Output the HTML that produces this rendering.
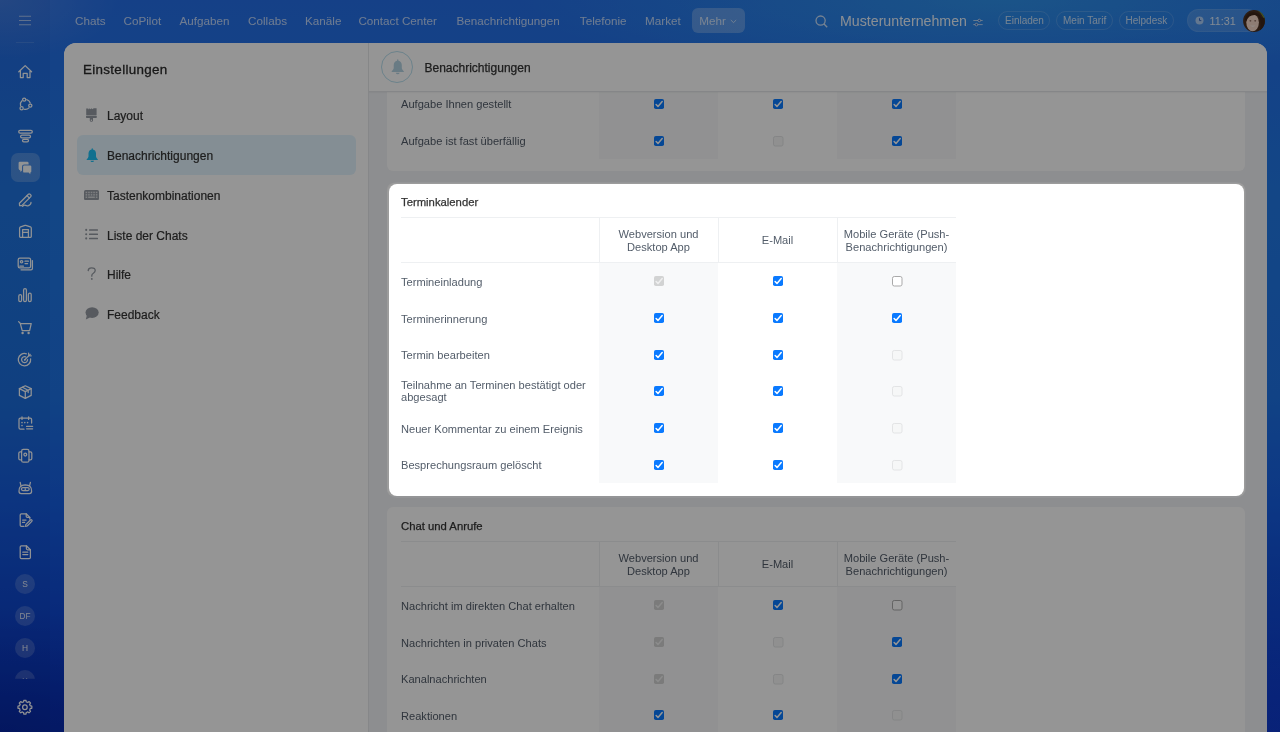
<!DOCTYPE html>
<html><head><meta charset="utf-8">
<style>
*{box-sizing:border-box;margin:0;padding:0}
html,body{width:1280px;height:732px;overflow:hidden}
body{-webkit-font-smoothing:antialiased}
#panel,#bg{will-change:transform}
body{position:relative;font-family:"Liberation Sans",sans-serif;background:linear-gradient(180deg,#2f6fd8 0%,#1d55cf 50%,#1038c8 100%)}
.abs{position:absolute}
#bg{position:absolute;left:0;top:0;width:1280px;height:732px;
 background:
  radial-gradient(ellipse 480px 80px at 1000px 0px, rgba(60,190,235,0.42), rgba(60,190,235,0) 100%),
  radial-gradient(ellipse 500px 160px at 1280px 732px, rgba(40,90,255,0.22), rgba(40,90,255,0) 100%),
  radial-gradient(ellipse 300px 120px at 0px 732px, rgba(0,0,60,0.18), rgba(0,0,60,0) 100%),
  radial-gradient(ellipse 120px 60px at 0px 0px, rgba(120,160,230,0.35), rgba(120,160,230,0) 100%),
  linear-gradient(180deg,rgb(36,110,232) 0%,rgb(33,121,230) 28%,rgb(30,114,228) 54%,rgb(22,94,226) 69%,rgb(10,55,198) 95%,rgb(9,50,192) 100%)}
#side2{position:absolute;left:0;top:0;width:50px;height:732px;background:rgba(0,0,30,0.035)}
.nav{position:absolute;top:14px;font-size:11.7px;color:rgba(255,255,255,0.7);white-space:nowrap;line-height:14px}
.ico{position:absolute;left:17px;width:16px;height:16px}
.ico svg{width:16px;height:16px;display:block}
#panel{position:absolute;left:64px;top:43px;width:1203px;height:700px;background:#fff;border-radius:12px 12px 0 0;overflow:hidden}
#leftp{position:absolute;left:0;top:0;width:305px;height:700px;background:#fff;border-right:1px solid #e6e8ea}
#content{position:absolute;left:305px;top:0;width:898px;height:700px;background:#f1f3f6}
#hdr{position:absolute;left:0;top:0;width:898px;height:49px;background:#fff;border-bottom:1px solid #e3e6e9;box-shadow:0 1px 1px rgba(0,0,0,0.03);z-index:5}
.card{position:absolute;left:18px;width:858px;background:#fff;border-radius:6px}
.ttl{position:absolute;left:14px;font-size:11.3px;color:#333;-webkit-text-stroke:0.25px #333}
.tbl{position:absolute;left:14px;width:555px}
.row{position:absolute;left:0;width:555px;height:36.5px}
.lbl{position:absolute;left:0;width:195px;font-size:11.1px;color:#525c69;line-height:12.5px}
.col{position:absolute;width:119px;background:#f8f9fa}
.cb{position:absolute;overflow:visible}
.cb.on{background:#0a7aff}
.cb.on::after,.cb.dis::after{content:"";position:absolute;left:3.3px;top:1.2px;width:2.6px;height:5.2px;border-right:1.6px solid #fff;border-bottom:1.6px solid #fff;transform:rotate(40deg)}
.cb.dis{background:#d6d6d6}
.cb.dis::after{border-color:#f0f0f0}
.cb.off{background:#fff;border:1px solid #767676}
.cb.doff{background:#fff;border:1px solid #dcdcdc}
.hdrtxt{position:absolute;width:119px;text-align:center;font-size:11.1px;color:#525c69;line-height:12.5px}
.mi{position:absolute;left:43px;font-size:12px;color:#333;line-height:14px;-webkit-text-stroke:0.2px #333}
.mico{position:absolute;left:20px;width:15px;height:15px}
#ov{position:absolute;left:389px;top:183.5px;width:854.5px;height:312px;border-radius:8px;box-shadow:0 0 0 2px rgba(255,255,255,0.06),0 0 0 3000px rgba(0,0,0,0.415);z-index:50;pointer-events:none}
</style></head><body>
<div id="bg"></div>
<div id="side2"></div>

<!-- top bar -->
<svg class="abs" style="left:19px;top:15px" width="12" height="11" viewBox="0 0 12 11"><path d="M0 1.25H12M0 5.5H12M0 9.75H12" stroke="rgba(255,255,255,0.55)" stroke-width="1.1"/></svg>
<div class="abs" style="left:16px;top:42px;width:18px;height:1px;background:rgba(255,255,255,0.12)"></div>
<div class="nav" style="left:75px">Chats</div>
<div class="nav" style="left:123.5px">CoPilot</div>
<div class="nav" style="left:179.5px">Aufgaben</div>
<div class="nav" style="left:248px">Collabs</div>
<div class="nav" style="left:305px">Kanäle</div>
<div class="nav" style="left:358.4px">Contact Center</div>
<div class="nav" style="left:456.5px">Benachrichtigungen</div>
<div class="nav" style="left:579.8px">Telefonie</div>
<div class="nav" style="left:645px">Market</div>
<div class="abs" style="left:692px;top:8px;width:52.5px;height:24.5px;border-radius:6px;background:rgba(255,255,255,0.25)"></div>
<div class="nav" style="left:699.2px;color:rgba(255,255,255,0.7)">Mehr</div>
<svg class="abs" style="left:729.5px;top:19.2px" width="7" height="5" viewBox="0 0 7 5"><path d="M0.8 1L3.5 3.6L6.2 1" fill="none" stroke="rgba(255,255,255,0.6)" stroke-width="1"/></svg>

<svg class="abs" style="left:814.5px;top:14.6px" width="13" height="13" viewBox="0 0 13 13"><circle cx="5.6" cy="5.6" r="4.6" fill="none" stroke="rgba(255,255,255,0.75)" stroke-width="1.3"/><path d="M9 9L12.2 12.2" stroke="rgba(255,255,255,0.75)" stroke-width="1.4"/></svg>
<div class="nav" style="left:840px;top:12.7px;font-size:14.2px;line-height:17px;color:rgba(255,255,255,0.9)">Musterunternehmen</div>
<svg class="abs" style="left:973px;top:17.5px" width="10" height="9" viewBox="0 0 10 9"><path d="M0.3 2.5H9.7M0.3 6.6H9.7" stroke="rgba(255,255,255,0.7)" stroke-width="0.9"/><circle cx="6.3" cy="2.5" r="1.3" fill="#2a64c4" stroke="rgba(255,255,255,0.7)" stroke-width="0.9"/><circle cx="3.4" cy="6.6" r="1.3" fill="#2a64c4" stroke="rgba(255,255,255,0.7)" stroke-width="0.9"/></svg>

<div class="abs" style="left:998px;top:11px;width:52px;height:19px;border-radius:10px;border:1px solid rgba(255,255,255,0.16)"></div>
<div class="nav" style="left:1005px;top:14px;font-size:10px;line-height:13px;color:rgba(255,255,255,0.74)">Einladen</div>
<div class="abs" style="left:1056px;top:11px;width:57px;height:19px;border-radius:10px;border:1px solid rgba(255,255,255,0.16)"></div>
<div class="nav" style="left:1063px;top:14px;font-size:10px;line-height:13px;color:rgba(255,255,255,0.74)">Mein Tarif</div>
<div class="abs" style="left:1119px;top:11px;width:55px;height:19px;border-radius:10px;border:1px solid rgba(255,255,255,0.16)"></div>
<div class="nav" style="left:1125.5px;top:14px;font-size:10px;line-height:13px;color:rgba(255,255,255,0.74)">Helpdesk</div>
<div class="abs" style="left:1187px;top:9px;width:72px;height:23px;border-radius:12px;background:rgba(255,255,255,0.14);border:1px solid rgba(255,255,255,0.08)"></div>
<svg class="abs" style="left:1195px;top:16px" width="9" height="9" viewBox="0 0 9 9"><circle cx="4.5" cy="4.5" r="4" fill="rgba(255,255,255,0.55)"/><path d="M4.5 2.2V4.6H6.3" fill="none" stroke="#3a69c0" stroke-width="1"/></svg>
<div class="nav" style="left:1209.5px;top:14.3px;font-size:10.8px;line-height:14px;color:rgba(255,255,255,0.82)">11:31</div>
<svg class="abs" style="left:1242.8px;top:9.6px" width="22" height="22" viewBox="0 0 22 22"><defs><clipPath id="av"><circle cx="11" cy="11" r="10.9"/></clipPath></defs><g clip-path="url(#av)"><rect width="22" height="22" fill="#4a3022"/><path d="M14 0L22 0L22 14Q21 5 14 0Z" fill="#7a9a3a"/><ellipse cx="9.6" cy="12.6" rx="6.3" ry="8.6" fill="#f4d6c6"/><path d="M2 10Q3 2 10.5 2.2Q17.8 2.6 19 10Q17 5.4 11.5 5Q5.5 5 3.4 11Z" fill="#3d2418"/><path d="M16 7Q18.5 12 17 20L22 22L22 8Z" fill="#3d2418"/><ellipse cx="7.4" cy="10.8" rx="1" ry="0.6" fill="#6a4a40"/><ellipse cx="12.2" cy="10.8" rx="1" ry="0.6" fill="#6a4a40"/><path d="M7 15.2Q9.8 18 12.6 15.2Q9.8 16.2 7 15.2Z" fill="#ffffff"/></g></svg>

<!-- sidebar icons -->
<div class="abs" style="left:11px;top:153px;width:28.5px;height:29px;border-radius:7px;background:rgba(255,255,255,0.2)"></div>
<svg class="abs" style="left:0;top:0" width="64" height="732" viewBox="0 0 64 732"><path stroke="rgba(255,255,255,0.97)" stroke-width="1.25" fill="none" stroke-linecap="round" stroke-linejoin="round" d="M18.8 71.8L25.2 65.6L31.6 71.8M20.4 70.3V77.6H23.2V73.4H27.2V77.6H30V70.3"/>
<g stroke="rgba(255,255,255,0.97)" stroke-width="1.25" fill="none" stroke-linecap="round" stroke-linejoin="round"><circle cx="24.2" cy="99.6" r="1.6"/><circle cx="30.3" cy="105.6" r="1.6"/><circle cx="21.6" cy="108.2" r="1.6"/><path d="M26.78 99.59A5.0 5.0 0 0 1 30.21 103.02M29.00 107.87A5.0 5.0 0 0 1 24.11 109.23M20.57 105.69A5.0 5.0 0 0 1 21.93 100.80"/></g>
<g stroke="rgba(255,255,255,0.97)" stroke-width="1.25" fill="none" stroke-linecap="round" stroke-linejoin="round"><rect x="18.7" y="130.4" width="13.6" height="2.8" rx="1.4"/><rect x="20.6" y="135" width="9.9" height="2.8" rx="1.4"/><rect x="22.5" y="139.3" width="6" height="2.6" rx="1.3"/></g>
<path fill="rgba(255,255,255,0.97)" d="M19.8 161.8H27.2Q28.6 161.8 28.6 163.2V164.6H24.2Q22 164.6 22 166.8V170.4L20.4 172V170.4Q18.6 170.2 18.6 168.6V163Q18.6 161.8 19.8 161.8Z"/><path fill="rgba(255,255,255,0.97)" d="M24.3 165.4H30.1Q31.3 165.4 31.3 166.6V171.4Q31.3 172.4 30.3 172.5V174.2L28.6 172.6H24.3Q23.1 172.6 23.1 171.4V166.6Q23.1 165.4 24.3 165.4Z"/>
<g stroke="rgba(255,255,255,0.97)" stroke-width="1.25" fill="none" stroke-linecap="round" stroke-linejoin="round"><path d="M19.6 205.6L19.4 203.2L28.4 194.2Q29.2 193.4 30 194.2L30.8 195Q31.6 195.8 30.8 196.6L21.8 205.6Z"/><path d="M27 195.6L29.4 198"/><path d="M22.6 206.4Q24 204.8 25.6 205.4Q27 206 28.4 205.6Q31.2 204.6 31 202.4"/></g>
<g stroke="rgba(255,255,255,0.97)" stroke-width="1.25" fill="none" stroke-linecap="round" stroke-linejoin="round"><path d="M19.6 236.6V228.2Q19.6 227.2 20.6 226.8L25 225.4Q25.4 225.3 25.8 225.4L30.4 226.8Q31.3 227.2 31.3 228.2V236.6Q31.3 237.4 30.5 237.4H20.4Q19.6 237.4 19.6 236.6Z"/><path d="M22.6 237.4V229.6H28.4V237.4M22.6 232.4H28.4"/></g>
<g stroke="rgba(255,255,255,0.97)" stroke-width="1.25" fill="none" stroke-linecap="round" stroke-linejoin="round"><rect x="18.2" y="258.2" width="12.4" height="9.6" rx="1.6"/><path d="M32.4 260.6V268.4Q32.4 269.8 31 269.8H21"/><circle cx="21.6" cy="261.8" r="1.2"/><path d="M19.8 266.2H23.4"/><path d="M25 261.2H28.4M25 263.6H27.6"/></g>
<g stroke="rgba(255,255,255,0.97)" stroke-width="1.25" fill="none" stroke-linecap="round" stroke-linejoin="round"><rect x="18.8" y="294.6" width="2.8" height="7" rx="1.4"/><rect x="23.6" y="288.6" width="2.8" height="13" rx="1.4"/><rect x="28.4" y="293" width="2.8" height="8.6" rx="1.4"/></g>
<g stroke="rgba(255,255,255,0.97)" stroke-width="1.25" fill="none" stroke-linecap="round" stroke-linejoin="round"><path d="M18.6 321.6L20.2 323.2L22.2 330.6H29.6L31.2 323.6H20.6"/></g><circle cx="22.6" cy="333" r="1.2" fill="rgba(255,255,255,0.97)"/><circle cx="28.6" cy="333" r="1.2" fill="rgba(255,255,255,0.97)"/>
<g stroke="rgba(255,255,255,0.97)" stroke-width="1.25" fill="none" stroke-linecap="round" stroke-linejoin="round"><path d="M30.6 358.8A6.2 6.2 0 1 1 26.4 353.8"/><path d="M27.6 359.6A3 3 0 1 1 25.6 356.8"/><path d="M24.8 359.8L30.2 354.4"/><path d="M28.6 353.2L28.8 355.6L31.2 355.8"/></g><circle cx="24.8" cy="359.8" r="0.9" fill="rgba(255,255,255,0.97)"/>
<g stroke="rgba(255,255,255,0.97)" stroke-width="1.25" fill="none" stroke-linecap="round" stroke-linejoin="round"><path d="M25.3 385.8L31.2 388.6V395.4L25.3 398.4L19.4 395.4V388.6Z"/><path d="M19.4 388.6L25.3 391.6L31.2 388.6M25.3 391.6V398.4M22.4 387.2L28.2 390.2V392.6"/></g>
<g stroke="rgba(255,255,255,0.97)" stroke-width="1.25" fill="none" stroke-linecap="round" stroke-linejoin="round"><path d="M31.6 423V419.6Q31.6 418.2 30.2 418.2H20.4Q19 418.2 19 419.6V427.8Q19 429.2 20.4 429.2H24"/><path d="M22 416.8V419.4M28.6 416.8V419.4M26.6 426.4H32.6M26.6 428.8H32.6"/></g><g fill="rgba(255,255,255,0.97)"><circle cx="22" cy="422.6" r="0.8"/><circle cx="24.8" cy="422.6" r="0.8"/><circle cx="27.6" cy="422.6" r="0.8"/><circle cx="22" cy="425.6" r="0.8"/></g>
<g stroke="rgba(255,255,255,0.97)" stroke-width="1.25" fill="none" stroke-linecap="round" stroke-linejoin="round"><rect x="21.6" y="449.4" width="7.4" height="12.8" rx="1.8"/><circle cx="25.3" cy="454.6" r="1.4"/><path d="M21.6 451.8H20.2Q18.8 451.8 18.8 453.2V458.4Q18.8 459.8 20.2 459.8H21.6M29 451.8H30.4Q31.8 451.8 31.8 453.2V458.4Q31.8 459.8 30.4 459.8H29"/></g>
<g stroke="rgba(255,255,255,0.97)" stroke-width="1.25" fill="none" stroke-linecap="round" stroke-linejoin="round"><path d="M19 491.2Q18.6 485.2 25.3 484.8Q32 485.2 31.6 491.2Q31.6 493.6 29.4 493.6H21.2Q19 493.6 19 491.2Z"/><path d="M21 485.8L20.2 482.4M29.6 485.8L30.4 482.4"/><rect x="21.4" y="487.6" width="7.8" height="3" rx="1.5"/></g><circle cx="25.3" cy="489.1" r="0.9" fill="rgba(255,255,255,0.97)"/>
<g stroke="rgba(255,255,255,0.97)" stroke-width="1.25" fill="none" stroke-linecap="round" stroke-linejoin="round"><path d="M24 526.4H21.4Q20.2 526.4 20.2 525.2V515Q20.2 513.8 21.4 513.8H26.2L29.8 517.4V519"/><path d="M26.2 513.8V516.2Q26.2 517.4 27.4 517.4H29.8"/><path d="M22.6 520H26M22.6 522.4H24.6"/><path d="M25.6 526.4L25.8 524.6L30.4 520Q31.1 519.3 31.8 520Q32.5 520.7 31.8 521.4L27.2 526Z"/></g>
<g stroke="rgba(255,255,255,0.97)" stroke-width="1.25" fill="none" stroke-linecap="round" stroke-linejoin="round"><path d="M21.4 545.8H26.4L30.4 549.8V557.4Q30.4 558.6 29.2 558.6H21.4Q20.2 558.6 20.2 557.4V547Q20.2 545.8 21.4 545.8Z"/><path d="M26.4 545.8V548.6Q26.4 549.8 27.6 549.8H30.4"/><path d="M22.8 552.2H27.8M22.8 554.6H27.8"/></g>
<circle cx="25" cy="584" r="10" fill="rgba(255,255,255,0.17)"/><text x="25" y="586.9" text-anchor="middle" font-family="Liberation Sans" font-size="8.4" font-weight="400" fill="rgba(255,255,255,0.85)">S</text>
<circle cx="25" cy="616" r="10" fill="rgba(255,255,255,0.17)"/><text x="25" y="618.9" text-anchor="middle" font-family="Liberation Sans" font-size="8.2" font-weight="400" fill="rgba(255,255,255,0.85)">DF</text>
<circle cx="25" cy="648" r="10" fill="rgba(255,255,255,0.17)"/><text x="25" y="650.9" text-anchor="middle" font-family="Liberation Sans" font-size="8.4" font-weight="400" fill="rgba(255,255,255,0.85)">H</text>
<clipPath id="clp4"><rect x="0" y="660" width="50" height="18.8"/></clipPath><g clip-path="url(#clp4)"><circle cx="25" cy="680" r="10" fill="rgba(255,255,255,0.17)"/><text x="25" y="682.6" text-anchor="middle" font-family="Liberation Sans" font-size="7.5" font-weight="400" fill="rgba(255,255,255,0.85)">H</text></g>
<g stroke="rgba(255,255,255,0.97)" stroke-width="1.25" fill="none" stroke-linecap="round" stroke-linejoin="round"><path d="M31.85 707.20L31.84 707.47L31.83 707.75L31.80 708.02L31.76 708.29L31.01 708.41L30.25 708.48L30.19 708.69L30.13 708.90L30.06 709.10L29.98 709.30L29.89 709.50L29.80 709.70L29.70 709.89L29.59 710.07L30.08 710.66L30.52 711.29L30.36 711.50L30.18 711.71L30.00 711.92L29.81 712.11L29.62 712.30L29.41 712.48L29.20 712.66L28.99 712.82L28.36 712.38L27.77 711.89L27.59 712.00L27.40 712.10L27.20 712.19L27.00 712.28L26.80 712.36L26.60 712.43L26.39 712.49L26.18 712.55L26.11 713.31L25.99 714.06L25.72 714.10L25.45 714.13L25.17 714.14L24.90 714.15L24.63 714.14L24.35 714.13L24.08 714.10L23.81 714.06L23.69 713.31L23.62 712.55L23.41 712.49L23.20 712.43L23.00 712.36L22.80 712.28L22.60 712.19L22.40 712.10L22.21 712.00L22.03 711.89L21.44 712.38L20.81 712.82L20.60 712.66L20.39 712.48L20.18 712.30L19.99 712.11L19.80 711.92L19.62 711.71L19.44 711.50L19.28 711.29L19.72 710.66L20.21 710.07L20.10 709.89L20.00 709.70L19.91 709.50L19.82 709.30L19.74 709.10L19.67 708.90L19.61 708.69L19.55 708.48L18.79 708.41L18.04 708.29L18.00 708.02L17.97 707.75L17.96 707.47L17.95 707.20L17.96 706.93L17.97 706.65L18.00 706.38L18.04 706.11L18.79 705.99L19.55 705.92L19.61 705.71L19.67 705.50L19.74 705.30L19.82 705.10L19.91 704.90L20.00 704.70L20.10 704.51L20.21 704.33L19.72 703.74L19.28 703.11L19.44 702.90L19.62 702.69L19.80 702.48L19.99 702.29L20.18 702.10L20.39 701.92L20.60 701.74L20.81 701.58L21.44 702.02L22.03 702.51L22.21 702.40L22.40 702.30L22.60 702.21L22.80 702.12L23.00 702.04L23.20 701.97L23.41 701.91L23.62 701.85L23.69 701.09L23.81 700.34L24.08 700.30L24.35 700.27L24.63 700.26L24.90 700.25L25.17 700.26L25.45 700.27L25.72 700.30L25.99 700.34L26.11 701.09L26.18 701.85L26.39 701.91L26.60 701.97L26.80 702.04L27.00 702.12L27.20 702.21L27.40 702.30L27.59 702.40L27.77 702.51L28.36 702.02L28.99 701.58L29.20 701.74L29.41 701.92L29.62 702.10L29.81 702.29L30.00 702.48L30.18 702.69L30.36 702.90L30.52 703.11L30.08 703.74L29.59 704.33L29.70 704.51L29.80 704.70L29.89 704.90L29.98 705.10L30.06 705.30L30.13 705.50L30.19 705.71L30.25 705.92L31.01 705.99L31.76 706.11L31.80 706.38L31.83 706.65L31.84 706.93Z"/><circle cx="24.9" cy="707.2" r="2.3"/></g></svg>

<!-- main panel -->
<div id="panel">
 <div id="leftp">
  <div class="abs" style="left:19px;top:17.9px;font-size:13.4px;letter-spacing:0.32px;color:#2b2b2b;-webkit-text-stroke:0.3px #2b2b2b;line-height:17px">Einstellungen</div>
  <div class="abs" style="left:12.5px;top:92px;width:279.5px;height:39.5px;border-radius:6px;background:#e2f4fd"></div>
<svg class="abs" style="left:22px;top:65px" width="11" height="14" viewBox="0 0 11 14"><path fill="#959ba3" d="M0.2 0.4H2.2L2.8 1.4L3.6 0.2L4.6 1.2L5.6 0.2L6.6 1.2L7.6 0.2H10.6V7.2H0.2Z"/><rect x="0" y="7.8" width="10.8" height="2.2" rx="0.8" fill="#959ba3"/><path fill="#959ba3" d="M3.8 10H7V12.2A1.6 1.6 0 0 1 3.8 12.2Z"/><circle cx="5.4" cy="12.2" r="0.7" fill="#fff"/></svg>
<svg class="abs" style="left:21.5px;top:104.6px" width="12.5" height="14.5" viewBox="0 0 12.5 14.5"><path fill="#1cc0f5" d="M6.25 0.3Q6.9 0.3 6.9 1.1V1.6Q9.9 2.3 10 5.6V8.6Q10.2 9.8 11.6 11.2Q12.4 12 11.4 12.1H1.1Q0.1 12 0.9 11.2Q2.3 9.8 2.5 8.6V5.6Q2.6 2.3 5.6 1.6V1.1Q5.6 0.3 6.25 0.3Z"/><path fill="#1cc0f5" d="M4.4 12.7H8.1Q7.6 14.2 6.25 14.2Q4.9 14.2 4.4 12.7Z"/></svg>
<svg class="abs" style="left:20px;top:146.6px" width="15" height="10.2" viewBox="0 0 15 10.2"><rect x="0" y="0" width="15" height="10.2" rx="1.6" fill="#959ba3"/><rect x="1.60" y="1.7" width="1.6" height="1.5" fill="#d8dadd"/><rect x="4.15" y="1.7" width="1.6" height="1.5" fill="#d8dadd"/><rect x="6.70" y="1.7" width="1.6" height="1.5" fill="#d8dadd"/><rect x="9.25" y="1.7" width="1.6" height="1.5" fill="#d8dadd"/><rect x="11.80" y="1.7" width="1.6" height="1.5" fill="#d8dadd"/><rect x="1.60" y="4.1" width="1.6" height="1.5" fill="#d8dadd"/><rect x="4.15" y="4.1" width="1.6" height="1.5" fill="#d8dadd"/><rect x="6.70" y="4.1" width="1.6" height="1.5" fill="#d8dadd"/><rect x="9.25" y="4.1" width="1.6" height="1.5" fill="#d8dadd"/><rect x="11.80" y="4.1" width="1.6" height="1.5" fill="#d8dadd"/><rect x="1.6" y="6.5" width="1.6" height="1.5" fill="#d8dadd"/><rect x="4.15" y="6.5" width="6.7" height="1.5" fill="#d8dadd"/><rect x="11.8" y="6.5" width="1.6" height="1.5" fill="#d8dadd"/></svg>
<svg class="abs" style="left:21px;top:185px" width="14" height="12" viewBox="0 0 14 12"><circle cx="1.2" cy="1.9" r="1.05" fill="#959ba3"/><rect x="4" y="1.15" width="9" height="1.5" rx="0.5" fill="#959ba3"/><circle cx="1.2" cy="6.2" r="1.05" fill="#959ba3"/><rect x="4" y="5.45" width="9" height="1.5" rx="0.5" fill="#959ba3"/><circle cx="1.2" cy="10.4" r="1.05" fill="#959ba3"/><rect x="4" y="9.65" width="9" height="1.5" rx="0.5" fill="#959ba3"/></svg>
<svg class="abs" style="left:22.5px;top:224px" width="10" height="13.5" viewBox="0 0 10 13.5"><path d="M1.2 3.6Q1.4 0.9 4.6 0.9Q8.2 0.9 8.2 3.6Q8.2 5.2 6.4 6.2Q4.8 7.1 4.8 8.6V9.2" fill="none" stroke="#959ba3" stroke-width="1.3" stroke-linecap="round"/><circle cx="4.8" cy="11.9" r="0.95" fill="#959ba3"/></svg>
<svg class="abs" style="left:20.5px;top:264px" width="14" height="13" viewBox="0 0 14 13"><ellipse cx="7.1" cy="5.6" rx="6.6" ry="5.3" fill="#959ba3"/><path d="M1.8 8.4L0.8 12.4L5 10.4Z" fill="#959ba3"/></svg>
  <div class="mi" style="top:66px">Layout</div>
  <div class="mi" style="top:106px">Benachrichtigungen</div>
  <div class="mi" style="top:145.5px">Tastenkombinationen</div>
  <div class="mi" style="top:185.5px">Liste der Chats</div>
  <div class="mi" style="top:225px">Hilfe</div>
  <div class="mi" style="top:265px">Feedback</div>
 </div>
 <div id="content">
  <div id="hdr">
   <div class="abs" style="left:12px;top:8px;width:32px;height:32px;border-radius:50%;border:1px solid #b9dfee"></div>
   <svg class="abs" style="left:21.5px;top:16.3px" width="13.5" height="15.6" viewBox="0 0 12.5 14.5"><path fill="#b4d3e2" d="M6.25 0.3Q6.9 0.3 6.9 1.1V1.6Q9.9 2.3 10 5.6V8.6Q10.2 9.8 11.6 11.2Q12.4 12 11.4 12.1H1.1Q0.1 12 0.9 11.2Q2.3 9.8 2.5 8.6V5.6Q2.6 2.3 5.6 1.6V1.1Q5.6 0.3 6.25 0.3Z"/><path fill="#b4d3e2" d="M4.4 12.7H8.1Q7.6 14.2 6.25 14.2Q4.9 14.2 4.4 12.7Z"/></svg>
   <div class="abs" style="left:55.5px;top:17.8px;font-size:12px;color:#333;-webkit-text-stroke:0.25px #333;line-height:15px">Benachrichtigungen</div>
  </div>
  <div class="card" style="top:-37.40px;height:165.84px">
<div class="ttl" style="top:13.00px;line-height:13px">Aufgaben</div>
<div class="abs" style="left:14px;top:34px;width:555px;height:1px;background:#eef0f2"></div>
<div class="abs" style="left:14px;top:79px;width:555px;height:1px;background:#eef0f2"></div>
<div class="abs" style="left:212px;top:34px;width:1px;height:45px;background:#eef0f2"></div>
<div class="abs" style="left:331px;top:34px;width:1px;height:45px;background:#eef0f2"></div>
<div class="abs" style="left:450px;top:34px;width:1px;height:45px;background:#eef0f2"></div>
<div class="hdrtxt" style="left:212px;top:45.10px;line-height:13px">Webversion und<br>Desktop App</div>
<div class="hdrtxt" style="left:331px;top:51.00px">E-Mail</div>
<div class="hdrtxt" style="left:450px;top:45.10px;line-height:13px">Mobile Geräte (Push-<br>Benachrichtigungen)</div>
<div class="col" style="left:212px;top:80px;width:119px;height:73.34px"></div>
<div class="col" style="left:450px;top:80px;width:119px;height:73.34px"></div>
<div class="lbl" style="left:14px;top:92.40px">Aufgabe Ihnen gestellt</div>
<svg class="cb" style="left:266.50px;top:93.34px" width="10.5" height="10.5" viewBox="0 0 10.5 10.5"><rect x="0" y="0" width="10" height="10" rx="1.8" fill="#0a7aff"/><path d="M2.1 5.5L4 7.4L8.2 2.5" fill="none" stroke="#fff" stroke-width="1.5" stroke-linecap="round" stroke-linejoin="round"/></svg>
<svg class="cb" style="left:385.50px;top:93.34px" width="10.5" height="10.5" viewBox="0 0 10.5 10.5"><rect x="0" y="0" width="10" height="10" rx="1.8" fill="#0a7aff"/><path d="M2.1 5.5L4 7.4L8.2 2.5" fill="none" stroke="#fff" stroke-width="1.5" stroke-linecap="round" stroke-linejoin="round"/></svg>
<svg class="cb" style="left:504.50px;top:93.34px" width="10.5" height="10.5" viewBox="0 0 10.5 10.5"><rect x="0" y="0" width="10" height="10" rx="1.8" fill="#0a7aff"/><path d="M2.1 5.5L4 7.4L8.2 2.5" fill="none" stroke="#fff" stroke-width="1.5" stroke-linecap="round" stroke-linejoin="round"/></svg>
<div class="lbl" style="left:14px;top:129.40px">Aufgabe ist fast überfällig</div>
<svg class="cb" style="left:266.50px;top:130.00px" width="10.5" height="10.5" viewBox="0 0 10.5 10.5"><rect x="0" y="0" width="10" height="10" rx="1.8" fill="#0a7aff"/><path d="M2.1 5.5L4 7.4L8.2 2.5" fill="none" stroke="#fff" stroke-width="1.5" stroke-linecap="round" stroke-linejoin="round"/></svg>
<svg class="cb" style="left:385.50px;top:130.00px" width="10.5" height="10.5" viewBox="0 0 10.5 10.5"><rect x="0.5" y="0.5" width="9.5" height="9.5" rx="1.8" fill="#f6f7f7" stroke="#e3e4e5" stroke-width="1"/></svg>
<svg class="cb" style="left:504.50px;top:130.00px" width="10.5" height="10.5" viewBox="0 0 10.5 10.5"><rect x="0" y="0" width="10" height="10" rx="1.8" fill="#0a7aff"/><path d="M2.1 5.5L4 7.4L8.2 2.5" fill="none" stroke="#fff" stroke-width="1.5" stroke-linecap="round" stroke-linejoin="round"/></svg>
</div>
<div class="card" style="top:140.00px;height:312.52px">
<div class="ttl" style="top:13.00px;line-height:13px">Terminkalender</div>
<div class="abs" style="left:14px;top:34px;width:555px;height:1px;background:#eef0f2"></div>
<div class="abs" style="left:14px;top:79px;width:555px;height:1px;background:#eef0f2"></div>
<div class="abs" style="left:212px;top:34px;width:1px;height:45px;background:#eef0f2"></div>
<div class="abs" style="left:331px;top:34px;width:1px;height:45px;background:#eef0f2"></div>
<div class="abs" style="left:450px;top:34px;width:1px;height:45px;background:#eef0f2"></div>
<div class="hdrtxt" style="left:212px;top:45.10px;line-height:13px">Webversion und<br>Desktop App</div>
<div class="hdrtxt" style="left:331px;top:51.00px">E-Mail</div>
<div class="hdrtxt" style="left:450px;top:45.10px;line-height:13px">Mobile Geräte (Push-<br>Benachrichtigungen)</div>
<div class="col" style="left:212px;top:80px;width:119px;height:220.02px"></div>
<div class="col" style="left:450px;top:80px;width:119px;height:220.02px"></div>
<div class="lbl" style="left:14px;top:93.00px">Termineinladung</div>
<svg class="cb" style="left:266.50px;top:93.34px" width="10.5" height="10.5" viewBox="0 0 10.5 10.5"><rect x="0" y="0" width="10" height="10" rx="1.8" fill="#d2d3d3"/><path d="M2.1 5.5L4 7.4L8.2 2.5" fill="none" stroke="#efefef" stroke-width="1.5" stroke-linecap="round" stroke-linejoin="round"/></svg>
<svg class="cb" style="left:385.50px;top:93.34px" width="10.5" height="10.5" viewBox="0 0 10.5 10.5"><rect x="0" y="0" width="10" height="10" rx="1.8" fill="#0a7aff"/><path d="M2.1 5.5L4 7.4L8.2 2.5" fill="none" stroke="#fff" stroke-width="1.5" stroke-linecap="round" stroke-linejoin="round"/></svg>
<svg class="cb" style="left:504.50px;top:93.34px" width="10.5" height="10.5" viewBox="0 0 10.5 10.5"><rect x="0.5" y="0.5" width="9.5" height="9.5" rx="1.8" fill="#fff" stroke="#a9a9a9" stroke-width="1"/></svg>
<div class="lbl" style="left:14px;top:130.00px">Terminerinnerung</div>
<svg class="cb" style="left:266.50px;top:130.00px" width="10.5" height="10.5" viewBox="0 0 10.5 10.5"><rect x="0" y="0" width="10" height="10" rx="1.8" fill="#0a7aff"/><path d="M2.1 5.5L4 7.4L8.2 2.5" fill="none" stroke="#fff" stroke-width="1.5" stroke-linecap="round" stroke-linejoin="round"/></svg>
<svg class="cb" style="left:385.50px;top:130.00px" width="10.5" height="10.5" viewBox="0 0 10.5 10.5"><rect x="0" y="0" width="10" height="10" rx="1.8" fill="#0a7aff"/><path d="M2.1 5.5L4 7.4L8.2 2.5" fill="none" stroke="#fff" stroke-width="1.5" stroke-linecap="round" stroke-linejoin="round"/></svg>
<svg class="cb" style="left:504.50px;top:130.00px" width="10.5" height="10.5" viewBox="0 0 10.5 10.5"><rect x="0" y="0" width="10" height="10" rx="1.8" fill="#0a7aff"/><path d="M2.1 5.5L4 7.4L8.2 2.5" fill="none" stroke="#fff" stroke-width="1.5" stroke-linecap="round" stroke-linejoin="round"/></svg>
<div class="lbl" style="left:14px;top:166.00px">Termin bearbeiten</div>
<svg class="cb" style="left:266.50px;top:166.68px" width="10.5" height="10.5" viewBox="0 0 10.5 10.5"><rect x="0" y="0" width="10" height="10" rx="1.8" fill="#0a7aff"/><path d="M2.1 5.5L4 7.4L8.2 2.5" fill="none" stroke="#fff" stroke-width="1.5" stroke-linecap="round" stroke-linejoin="round"/></svg>
<svg class="cb" style="left:385.50px;top:166.68px" width="10.5" height="10.5" viewBox="0 0 10.5 10.5"><rect x="0" y="0" width="10" height="10" rx="1.8" fill="#0a7aff"/><path d="M2.1 5.5L4 7.4L8.2 2.5" fill="none" stroke="#fff" stroke-width="1.5" stroke-linecap="round" stroke-linejoin="round"/></svg>
<svg class="cb" style="left:504.50px;top:166.68px" width="10.5" height="10.5" viewBox="0 0 10.5 10.5"><rect x="0.5" y="0.5" width="9.5" height="9.5" rx="1.8" fill="#f6f7f7" stroke="#e3e4e5" stroke-width="1"/></svg>
<div class="lbl" style="left:14px;top:195.54px;line-height:12.8px">Teilnahme an Terminen bestätigt oder<br>abgesagt</div>
<svg class="cb" style="left:266.50px;top:203.34px" width="10.5" height="10.5" viewBox="0 0 10.5 10.5"><rect x="0" y="0" width="10" height="10" rx="1.8" fill="#0a7aff"/><path d="M2.1 5.5L4 7.4L8.2 2.5" fill="none" stroke="#fff" stroke-width="1.5" stroke-linecap="round" stroke-linejoin="round"/></svg>
<svg class="cb" style="left:385.50px;top:203.34px" width="10.5" height="10.5" viewBox="0 0 10.5 10.5"><rect x="0" y="0" width="10" height="10" rx="1.8" fill="#0a7aff"/><path d="M2.1 5.5L4 7.4L8.2 2.5" fill="none" stroke="#fff" stroke-width="1.5" stroke-linecap="round" stroke-linejoin="round"/></svg>
<svg class="cb" style="left:504.50px;top:203.34px" width="10.5" height="10.5" viewBox="0 0 10.5 10.5"><rect x="0.5" y="0.5" width="9.5" height="9.5" rx="1.8" fill="#f6f7f7" stroke="#e3e4e5" stroke-width="1"/></svg>
<div class="lbl" style="left:14px;top:240.00px">Neuer Kommentar zu einem Ereignis</div>
<svg class="cb" style="left:266.50px;top:240.02px" width="10.5" height="10.5" viewBox="0 0 10.5 10.5"><rect x="0" y="0" width="10" height="10" rx="1.8" fill="#0a7aff"/><path d="M2.1 5.5L4 7.4L8.2 2.5" fill="none" stroke="#fff" stroke-width="1.5" stroke-linecap="round" stroke-linejoin="round"/></svg>
<svg class="cb" style="left:385.50px;top:240.02px" width="10.5" height="10.5" viewBox="0 0 10.5 10.5"><rect x="0" y="0" width="10" height="10" rx="1.8" fill="#0a7aff"/><path d="M2.1 5.5L4 7.4L8.2 2.5" fill="none" stroke="#fff" stroke-width="1.5" stroke-linecap="round" stroke-linejoin="round"/></svg>
<svg class="cb" style="left:504.50px;top:240.02px" width="10.5" height="10.5" viewBox="0 0 10.5 10.5"><rect x="0.5" y="0.5" width="9.5" height="9.5" rx="1.8" fill="#f6f7f7" stroke="#e3e4e5" stroke-width="1"/></svg>
<div class="lbl" style="left:14px;top:276.00px">Besprechungsraum gelöscht</div>
<svg class="cb" style="left:266.50px;top:276.69px" width="10.5" height="10.5" viewBox="0 0 10.5 10.5"><rect x="0" y="0" width="10" height="10" rx="1.8" fill="#0a7aff"/><path d="M2.1 5.5L4 7.4L8.2 2.5" fill="none" stroke="#fff" stroke-width="1.5" stroke-linecap="round" stroke-linejoin="round"/></svg>
<svg class="cb" style="left:385.50px;top:276.69px" width="10.5" height="10.5" viewBox="0 0 10.5 10.5"><rect x="0" y="0" width="10" height="10" rx="1.8" fill="#0a7aff"/><path d="M2.1 5.5L4 7.4L8.2 2.5" fill="none" stroke="#fff" stroke-width="1.5" stroke-linecap="round" stroke-linejoin="round"/></svg>
<svg class="cb" style="left:504.50px;top:276.69px" width="10.5" height="10.5" viewBox="0 0 10.5 10.5"><rect x="0.5" y="0.5" width="9.5" height="9.5" rx="1.8" fill="#f6f7f7" stroke="#e3e4e5" stroke-width="1"/></svg>
</div>
<div class="card" style="top:464.00px;height:275.85px">
<div class="ttl" style="top:13.00px;line-height:13px">Chat und Anrufe</div>
<div class="abs" style="left:14px;top:34px;width:555px;height:1px;background:#eef0f2"></div>
<div class="abs" style="left:14px;top:79px;width:555px;height:1px;background:#eef0f2"></div>
<div class="abs" style="left:212px;top:34px;width:1px;height:45px;background:#eef0f2"></div>
<div class="abs" style="left:331px;top:34px;width:1px;height:45px;background:#eef0f2"></div>
<div class="abs" style="left:450px;top:34px;width:1px;height:45px;background:#eef0f2"></div>
<div class="hdrtxt" style="left:212px;top:45.10px;line-height:13px">Webversion und<br>Desktop App</div>
<div class="hdrtxt" style="left:331px;top:51.00px">E-Mail</div>
<div class="hdrtxt" style="left:450px;top:45.10px;line-height:13px">Mobile Geräte (Push-<br>Benachrichtigungen)</div>
<div class="col" style="left:212px;top:80px;width:119px;height:183.35px"></div>
<div class="col" style="left:450px;top:80px;width:119px;height:183.35px"></div>
<div class="lbl" style="left:14px;top:93.00px">Nachricht im direkten Chat erhalten</div>
<svg class="cb" style="left:266.50px;top:93.34px" width="10.5" height="10.5" viewBox="0 0 10.5 10.5"><rect x="0" y="0" width="10" height="10" rx="1.8" fill="#d2d3d3"/><path d="M2.1 5.5L4 7.4L8.2 2.5" fill="none" stroke="#efefef" stroke-width="1.5" stroke-linecap="round" stroke-linejoin="round"/></svg>
<svg class="cb" style="left:385.50px;top:93.34px" width="10.5" height="10.5" viewBox="0 0 10.5 10.5"><rect x="0" y="0" width="10" height="10" rx="1.8" fill="#0a7aff"/><path d="M2.1 5.5L4 7.4L8.2 2.5" fill="none" stroke="#fff" stroke-width="1.5" stroke-linecap="round" stroke-linejoin="round"/></svg>
<svg class="cb" style="left:504.50px;top:93.34px" width="10.5" height="10.5" viewBox="0 0 10.5 10.5"><rect x="0.5" y="0.5" width="9.5" height="9.5" rx="1.8" fill="#fff" stroke="#a9a9a9" stroke-width="1"/></svg>
<div class="lbl" style="left:14px;top:130.00px">Nachrichten in privaten Chats</div>
<svg class="cb" style="left:266.50px;top:130.00px" width="10.5" height="10.5" viewBox="0 0 10.5 10.5"><rect x="0" y="0" width="10" height="10" rx="1.8" fill="#d2d3d3"/><path d="M2.1 5.5L4 7.4L8.2 2.5" fill="none" stroke="#efefef" stroke-width="1.5" stroke-linecap="round" stroke-linejoin="round"/></svg>
<svg class="cb" style="left:385.50px;top:130.00px" width="10.5" height="10.5" viewBox="0 0 10.5 10.5"><rect x="0.5" y="0.5" width="9.5" height="9.5" rx="1.8" fill="#f6f7f7" stroke="#e3e4e5" stroke-width="1"/></svg>
<svg class="cb" style="left:504.50px;top:130.00px" width="10.5" height="10.5" viewBox="0 0 10.5 10.5"><rect x="0" y="0" width="10" height="10" rx="1.8" fill="#0a7aff"/><path d="M2.1 5.5L4 7.4L8.2 2.5" fill="none" stroke="#fff" stroke-width="1.5" stroke-linecap="round" stroke-linejoin="round"/></svg>
<div class="lbl" style="left:14px;top:166.00px">Kanalnachrichten</div>
<svg class="cb" style="left:266.50px;top:166.68px" width="10.5" height="10.5" viewBox="0 0 10.5 10.5"><rect x="0" y="0" width="10" height="10" rx="1.8" fill="#d2d3d3"/><path d="M2.1 5.5L4 7.4L8.2 2.5" fill="none" stroke="#efefef" stroke-width="1.5" stroke-linecap="round" stroke-linejoin="round"/></svg>
<svg class="cb" style="left:385.50px;top:166.68px" width="10.5" height="10.5" viewBox="0 0 10.5 10.5"><rect x="0.5" y="0.5" width="9.5" height="9.5" rx="1.8" fill="#f6f7f7" stroke="#e3e4e5" stroke-width="1"/></svg>
<svg class="cb" style="left:504.50px;top:166.68px" width="10.5" height="10.5" viewBox="0 0 10.5 10.5"><rect x="0" y="0" width="10" height="10" rx="1.8" fill="#0a7aff"/><path d="M2.1 5.5L4 7.4L8.2 2.5" fill="none" stroke="#fff" stroke-width="1.5" stroke-linecap="round" stroke-linejoin="round"/></svg>
<div class="lbl" style="left:14px;top:203.00px">Reaktionen</div>
<svg class="cb" style="left:266.50px;top:203.34px" width="10.5" height="10.5" viewBox="0 0 10.5 10.5"><rect x="0" y="0" width="10" height="10" rx="1.8" fill="#0a7aff"/><path d="M2.1 5.5L4 7.4L8.2 2.5" fill="none" stroke="#fff" stroke-width="1.5" stroke-linecap="round" stroke-linejoin="round"/></svg>
<svg class="cb" style="left:385.50px;top:203.34px" width="10.5" height="10.5" viewBox="0 0 10.5 10.5"><rect x="0" y="0" width="10" height="10" rx="1.8" fill="#0a7aff"/><path d="M2.1 5.5L4 7.4L8.2 2.5" fill="none" stroke="#fff" stroke-width="1.5" stroke-linecap="round" stroke-linejoin="round"/></svg>
<svg class="cb" style="left:504.50px;top:203.34px" width="10.5" height="10.5" viewBox="0 0 10.5 10.5"><rect x="0.5" y="0.5" width="9.5" height="9.5" rx="1.8" fill="#f6f7f7" stroke="#e3e4e5" stroke-width="1"/></svg>
<div class="lbl" style="left:14px;top:240.00px">Erwähnungen</div>
<svg class="cb" style="left:266.50px;top:240.02px" width="10.5" height="10.5" viewBox="0 0 10.5 10.5"><rect x="0" y="0" width="10" height="10" rx="1.8" fill="#0a7aff"/><path d="M2.1 5.5L4 7.4L8.2 2.5" fill="none" stroke="#fff" stroke-width="1.5" stroke-linecap="round" stroke-linejoin="round"/></svg>
<svg class="cb" style="left:385.50px;top:240.02px" width="10.5" height="10.5" viewBox="0 0 10.5 10.5"><rect x="0" y="0" width="10" height="10" rx="1.8" fill="#0a7aff"/><path d="M2.1 5.5L4 7.4L8.2 2.5" fill="none" stroke="#fff" stroke-width="1.5" stroke-linecap="round" stroke-linejoin="round"/></svg>
<svg class="cb" style="left:504.50px;top:240.02px" width="10.5" height="10.5" viewBox="0 0 10.5 10.5"><rect x="0" y="0" width="10" height="10" rx="1.8" fill="#0a7aff"/><path d="M2.1 5.5L4 7.4L8.2 2.5" fill="none" stroke="#fff" stroke-width="1.5" stroke-linecap="round" stroke-linejoin="round"/></svg>
</div>
 </div>
</div>

<div id="ov"></div>
</body></html>
